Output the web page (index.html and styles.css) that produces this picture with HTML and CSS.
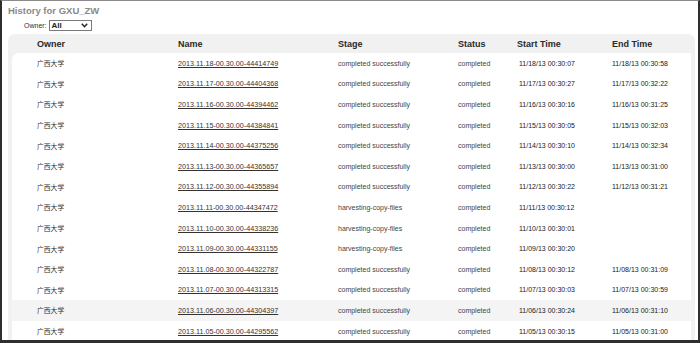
FILE: index.html
```html
<!DOCTYPE html>
<html>
<head>
<meta charset="utf-8">
<link rel="stylesheet" href="styles.css">
</head>
<body>
<div class="frame">
  <div class="title">History for GXU_ZW</div>
  <div class="filter">
    <span class="filter-label">Owner:</span>
    <div class="select"><span class="select-value">All</span>
      <svg class="chev" width="7" height="5" viewBox="0 0 7 5"><path d="M0.8 0.8 L3.5 3.8 L6.2 0.8" fill="none" stroke="#222" stroke-width="1.4"/></svg>
    </div>
  </div>
  <div class="panel">
    <div class="row head">
      <div>Owner</div><div>Name</div><div>Stage</div><div>Status</div><div>Start Time</div><div>End Time</div>
    </div>
    <div class="body">
      <div class="row"><div class="own">广西大学</div><div><a class="lnk">2013.11.18-00.30.00-44414749</a></div><div class="txt">completed successfully</div><div class="txt">completed</div><div class="tm">11/18/13 00:30:07</div><div class="tm">11/18/13 00:30:58</div></div>
      <div class="row"><div class="own">广西大学</div><div><a class="lnk">2013.11.17-00.30.00-44404368</a></div><div class="txt">completed successfully</div><div class="txt">completed</div><div class="tm">11/17/13 00:30:27</div><div class="tm">11/17/13 00:32:22</div></div>
      <div class="row"><div class="own">广西大学</div><div><a class="lnk">2013.11.16-00.30.00-44394462</a></div><div class="txt">completed successfully</div><div class="txt">completed</div><div class="tm">11/16/13 00:30:16</div><div class="tm">11/16/13 00:31:25</div></div>
      <div class="row"><div class="own">广西大学</div><div><a class="lnk">2013.11.15-00.30.00-44384841</a></div><div class="txt">completed successfully</div><div class="txt">completed</div><div class="tm">11/15/13 00:30:05</div><div class="tm">11/15/13 00:32:03</div></div>
      <div class="row"><div class="own">广西大学</div><div><a class="lnk">2013.11.14-00.30.00-44375256</a></div><div class="txt">completed successfully</div><div class="txt">completed</div><div class="tm">11/14/13 00:30:10</div><div class="tm">11/14/13 00:32:34</div></div>
      <div class="row"><div class="own">广西大学</div><div><a class="lnk">2013.11.13-00.30.00-44365657</a></div><div class="txt">completed successfully</div><div class="txt">completed</div><div class="tm">11/13/13 00:30:00</div><div class="tm">11/13/13 00:31:00</div></div>
      <div class="row"><div class="own">广西大学</div><div><a class="lnk">2013.11.12-00.30.00-44355894</a></div><div class="txt">completed successfully</div><div class="txt">completed</div><div class="tm">11/12/13 00:30:22</div><div class="tm">11/12/13 00:31:21</div></div>
      <div class="row"><div class="own">广西大学</div><div><a class="lnk">2013.11.11-00.30.00-44347472</a></div><div class="txt">harvesting-copy-files</div><div class="txt">completed</div><div class="tm">11/11/13 00:30:12</div><div class="tm"></div></div>
      <div class="row"><div class="own">广西大学</div><div><a class="lnk">2013.11.10-00.30.00-44338236</a></div><div class="txt">harvesting-copy-files</div><div class="txt">completed</div><div class="tm">11/10/13 00:30:01</div><div class="tm"></div></div>
      <div class="row"><div class="own">广西大学</div><div><a class="lnk">2013.11.09-00.30.00-44331155</a></div><div class="txt">harvesting-copy-files</div><div class="txt">completed</div><div class="tm">11/09/13 00:30:20</div><div class="tm"></div></div>
      <div class="row"><div class="own">广西大学</div><div><a class="lnk">2013.11.08-00.30.00-44322787</a></div><div class="txt">completed successfully</div><div class="txt">completed</div><div class="tm">11/08/13 00:30:12</div><div class="tm">11/08/13 00:31:09</div></div>
      <div class="row"><div class="own">广西大学</div><div><a class="lnk">2013.11.07-00.30.00-44313315</a></div><div class="txt">completed successfully</div><div class="txt">completed</div><div class="tm">11/07/13 00:30:03</div><div class="tm">11/07/13 00:30:59</div></div>
      <div class="row alt"><div class="own">广西大学</div><div><a class="lnk">2013.11.06-00.30.00-44304397</a></div><div class="txt">completed successfully</div><div class="txt">completed</div><div class="tm">11/06/13 00:30:24</div><div class="tm">11/06/13 00:31:10</div></div>
      <div class="row"><div class="own">广西大学</div><div><a class="lnk">2013.11.05-00.30.00-44295562</a></div><div class="txt">completed successfully</div><div class="txt">completed</div><div class="tm">11/05/13 00:30:15</div><div class="tm">11/05/13 00:31:00</div></div>
    </div>
  </div>
</div>
</body>
</html>
```
FILE: styles.css
```css
html, body {
  margin: 0;
  padding: 0;
  background: #fff;
}
.frame {
  width: 700px;
  height: 343px;
  box-sizing: border-box;
  border-style: solid;
  border-color: #8a8a8a #2e2e2e #2e2e2e #2e2e2e;
  border-width: 1px 2px 3px 2px;
  padding: 0 3px 0 6px;
  overflow: hidden;
  background: #fff;
  font-family: "Liberation Sans", Arial, "Noto Sans CJK SC", sans-serif;
}
.title {
  height: 16px;
  padding-top: 3px;
  line-height: 14px;
  font-size: 9.5px;
  font-weight: bold;
  color: #8a8a8a;
  box-sizing: border-box;
  height: 17px;
}
.filter {
  display: flex;
  align-items: center;
  height: 15px;
  padding-left: 16px;
}
.filter-label {
  font-size: 7px;
  color: #333;
  margin-right: 2px;
}
.select {
  width: 43px;
  height: 11px;
  box-sizing: border-box;
  border: 1px solid #7a7a7a;
  background: #fff;
  display: flex;
  align-items: center;
  justify-content: space-between;
  padding: 0 3px 0 2px;
}
.select-value {
  font-size: 8px;
  font-weight: bold;
  color: #222;
  line-height: 9px;
}
.chev {
  display: block;
}
.panel {
  margin-top: 1px;
  background: #f1f1f1;
  border-radius: 7px 7px 0 0;
}
.row {
  display: grid;
  grid-template-columns: 166px 160px 120px 59px 95px 1fr;
  align-items: center;
  height: 20.6px;
  font-size: 7px;
  color: #333;
}
.row > div:first-child {
  padding-left: 25px;
}
.row.head {
  height: 19px;
  padding-left: 4px;
  font-size: 9px;
  font-weight: bold;
  color: #2a2a2a;
}
.body {
  background: #fff;
  margin-left: 4px;
  margin-right: 4px;
  border-radius: 7px 0 0 0;
}
.row.alt {
  background: #f4f4f4;
}
.own {
  font-family: "Noto Sans CJK SC", sans-serif;
  font-size: 6.8px;
  color: #333;
}
.lnk {
  color: #333;
  text-decoration: underline;
  font-size: 7.2px;
}
.txt {
  color: #444;
}
.tm {
  color: #1a1a1a;
  font-size: 7px;
}
.row > .tm:nth-child(5) {
  padding-left: 2px;
}
```
